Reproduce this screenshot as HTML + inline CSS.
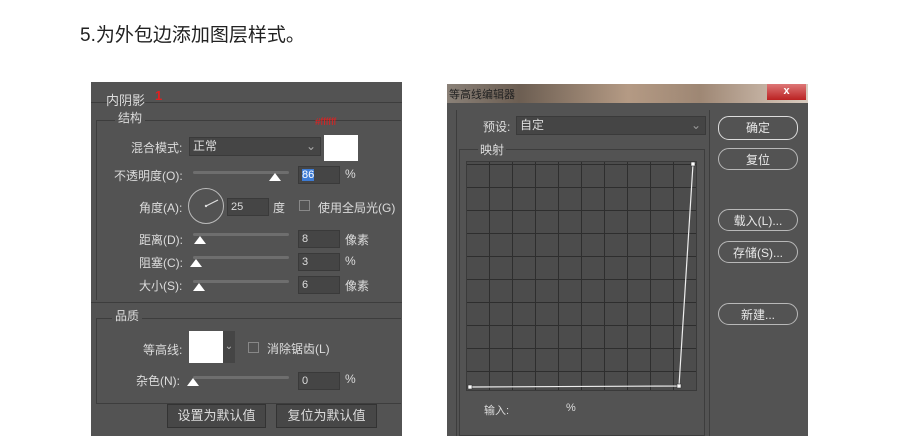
<!DOCTYPE html>
<html><head><meta charset="utf-8"><style>
body{margin:0;width:900px;height:436px;background:#fff;position:relative;overflow:hidden;font-family:"Liberation Sans","Noto Sans CJK SC",sans-serif}
.a{position:absolute;white-space:nowrap}
.t{color:#dcdcdc;font-size:12px}
.L .t,.L .box{margin-top:-2px}
.box{position:absolute;background:#454545;border:1px solid #3a3a3a;color:#ddd;font-size:11px;padding-left:3px;box-sizing:border-box;line-height:16px}
.sl{position:absolute;height:3px;background:#6e6e6e;border-radius:2px}
.th{position:absolute;width:0;height:0;border-left:6px solid transparent;border-right:6px solid transparent;border-bottom:8px solid #fff}
.btn{position:absolute;border:1px solid #b8b8b8;border-radius:11px;color:#e8e8e8;font-size:12px;text-align:center;line-height:22px;height:22px;box-sizing:border-box}
</style></head><body>
<div class="a" style="left:80px;top:20px;font-size:19px;color:#222">5.为外包边添加图层样式。</div>

<div class="L">
<div class="a" style="left:91px;top:82px;width:311px;height:354px;background:#535353"></div>
<div class="a" style="left:91px;top:102px;width:311px;height:1px;background:#3d3d3d"></div>
<div class="a t" style="left:106px;top:92px;font-size:13px">内阴影</div>
<div class="a" style="left:155px;top:88px;color:#e02020;font-size:13px;font-weight:bold">1</div>
<div class="a" style="left:96px;top:120px;width:305px;height:1px;background:#3d3d3d"></div>
<div class="a" style="left:96px;top:120px;width:1px;height:180px;background:#3d3d3d"></div>
<div class="a t" style="left:115px;top:111px;background:#535353;padding:0 3px">结构</div>
<div class="a" style="left:315px;top:117px;color:#e02020;font-size:10px">#ffffff</div>
<div class="a t" style="left:131px;top:141px">混合模式:</div>
<div class="box" style="left:189px;top:139px;width:132px;height:19px;font-size:12px">正常<span style="position:absolute;right:4px;color:#aaa">⌄</span></div>
<div class="a" style="left:324px;top:135px;width:34px;height:26px;background:#fff"></div>
<div class="a t" style="left:114px;top:169px">不透明度(O):</div>
<div class="sl" style="left:193px;top:171px;width:96px"></div><div class="th" style="left:269px;top:173px"></div>
<div class="box" style="left:298px;top:168px;width:42px;height:18px"><span style="background:#3d7bd4;color:#fff">86</span></div>
<div class="a t" style="left:345px;top:169px">%</div>
<div class="a t" style="left:139px;top:201px">角度(A):</div>
<div class="a" style="left:188px;top:188px;width:34px;height:34px;border:1px solid #bbb;border-radius:50%"></div>
<svg class="a" style="left:188px;top:188px" width="36" height="36"><line x1="18" y1="18" x2="30" y2="12" stroke="#ddd" stroke-width="1.2"/><circle cx="18" cy="18" r="1.2" fill="#ddd"/></svg>
<div class="box" style="left:227px;top:200px;width:42px;height:18px">25</div>
<div class="a t" style="left:273px;top:201px">度</div>
<div class="a" style="left:299px;top:200px;width:11px;height:11px;border:1px solid #888;box-sizing:border-box"></div>
<div class="a t" style="left:318px;top:201px">使用全局光(G)</div>
<div class="a t" style="left:139px;top:233px">距离(D):</div>
<div class="sl" style="left:193px;top:233px;width:96px"></div><div class="th" style="left:194px;top:236px"></div>
<div class="box" style="left:298px;top:232px;width:42px;height:18px">8</div><div class="a t" style="left:345px;top:233px">像素</div>
<div class="a t" style="left:139px;top:256px">阻塞(C):</div>
<div class="sl" style="left:193px;top:256px;width:96px"></div><div class="th" style="left:190px;top:259px"></div>
<div class="box" style="left:298px;top:255px;width:42px;height:18px">3</div><div class="a t" style="left:345px;top:256px">%</div>
<div class="a t" style="left:139px;top:279px">大小(S):</div>
<div class="sl" style="left:193px;top:280px;width:96px"></div><div class="th" style="left:193px;top:283px"></div>
<div class="box" style="left:298px;top:278px;width:42px;height:18px">6</div><div class="a t" style="left:345px;top:279px">像素</div>
<div class="a" style="left:91px;top:302px;width:311px;height:1px;background:#3d3d3d"></div>
<div class="a" style="left:96px;top:318px;width:305px;height:1px;background:#3d3d3d"></div>
<div class="a" style="left:96px;top:318px;width:1px;height:85px;background:#3d3d3d"></div>
<div class="a t" style="left:112px;top:309px;background:#535353;padding:0 3px">品质</div>
<div class="a t" style="left:143px;top:343px">等高线:</div>
<div class="a" style="left:189px;top:331px;width:34px;height:32px;background:#fff"></div>
<div class="a" style="left:223px;top:331px;width:12px;height:32px;background:#454545;color:#bbb;font-size:10px;text-align:center;line-height:32px">⌄</div>
<div class="a" style="left:248px;top:342px;width:11px;height:11px;border:1px solid #888;box-sizing:border-box"></div>
<div class="a t" style="left:267px;top:342px">消除锯齿(L)</div>
<div class="a t" style="left:136px;top:374px">杂色(N):</div>
<div class="sl" style="left:193px;top:376px;width:96px"></div><div class="th" style="left:187px;top:378px"></div>
<div class="box" style="left:298px;top:374px;width:42px;height:18px">0</div><div class="a t" style="left:345px;top:374px">%</div>
<div class="a" style="left:96px;top:403px;width:305px;height:1px;background:#3d3d3d"></div>
<div class="a t" style="left:167px;top:406px;width:97px;height:22px;background:#474747;border:1px solid #333;text-align:center;line-height:22px;font-size:13px">设置为默认值</div>
<div class="a t" style="left:276px;top:406px;width:99px;height:22px;background:#474747;border:1px solid #333;text-align:center;line-height:22px;font-size:13px">复位为默认值</div>
</div>

<div class="a" style="left:447px;top:84px;width:361px;height:352px;background:#535353"></div>
<div class="a" style="left:447px;top:84px;width:361px;height:19px;background:linear-gradient(90deg,#8a8178,#6c5e52 20%,#b49a84 50%,#9e8774 70%,#c7b5a6 90%,#d9ccc0)"></div>
<div class="a" style="left:449px;top:86px;font-size:11px;color:#222">等高线编辑器</div>
<div class="a" style="left:767px;top:84px;width:39px;height:16px;background:linear-gradient(#d77,#b22);color:#fff;font-size:11px;text-align:center;line-height:15px;font-weight:bold">x</div>
<div class="a" style="left:456px;top:110px;width:1px;height:326px;background:#3d3d3d"></div>
<div class="a" style="left:709px;top:110px;width:1px;height:326px;background:#3d3d3d"></div>
<div class="a t" style="left:483px;top:118px">预设:</div>
<div class="box" style="left:516px;top:116px;width:190px;height:19px;font-size:12px">自定<span style="position:absolute;right:4px;color:#999">⌄</span></div>
<div class="a" style="left:459px;top:149px;width:246px;height:287px;border:1px solid #3d3d3d;box-sizing:border-box"></div>
<div class="a t" style="left:478px;top:141px;background:#535353;padding:0 2px">映射</div>
<div class="a" style="left:466px;top:161px;width:231px;height:230px;background:#4c4c4c;border:1px solid #3a3a3a;box-sizing:border-box;background-image:linear-gradient(90deg,#2e2e2e 1px,transparent 1px),linear-gradient(#2e2e2e 1px,transparent 1px);background-size:23px 23px;background-position:-1px 2px"></div>
<svg class="a" style="left:466px;top:161px" width="232" height="231"><polyline points="4,226 213,225 227,3" fill="none" stroke="#eee" stroke-width="1.2"/><rect x="2" y="224" width="4" height="4" fill="#fff" stroke="#333" stroke-width=".6"/><rect x="211" y="223" width="4" height="4" fill="#fff" stroke="#333" stroke-width=".6"/><rect x="225" y="1" width="4" height="4" fill="#fff" stroke="#333" stroke-width=".6"/></svg>
<div class="a t" style="left:484px;top:402px;font-size:11px">输入:</div>
<div class="a t" style="left:566px;top:402px;font-size:11px">%</div>
<div class="btn" style="left:718px;top:116px;width:80px;height:24px;line-height:23px;border-color:#ddd;border-width:1.5px">确定</div>
<div class="btn" style="left:718px;top:148px;width:80px">复位</div>
<div class="btn" style="left:718px;top:209px;width:80px">载入(L)...</div>
<div class="btn" style="left:718px;top:241px;width:80px">存储(S)...</div>
<div class="btn" style="left:718px;top:303px;width:80px">新建...</div>
</body></html>
